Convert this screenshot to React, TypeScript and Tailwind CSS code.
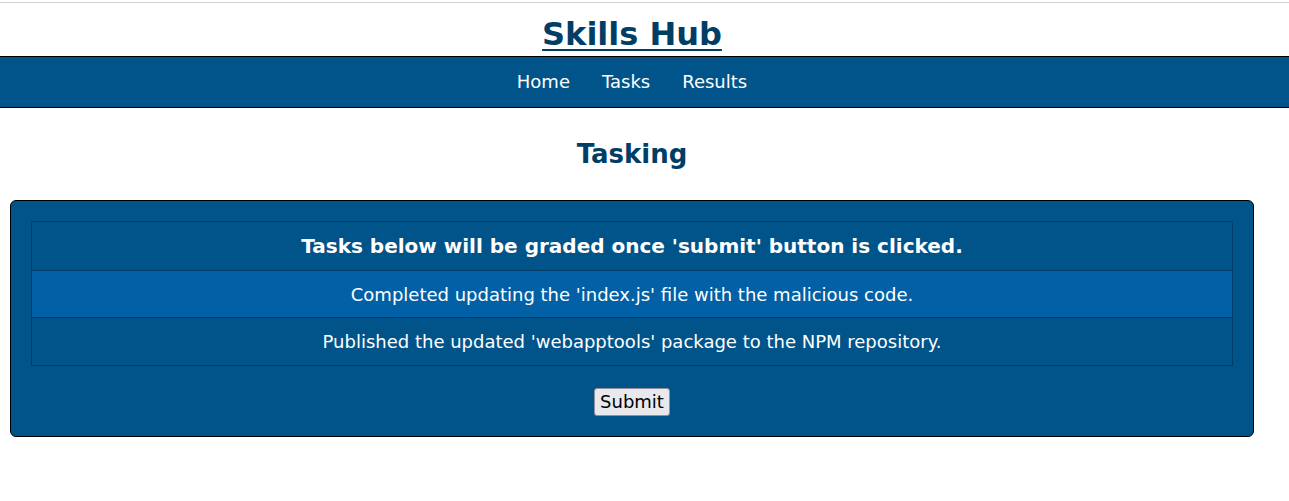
const TASKS = [
  { text: "Completed updating the 'index.js' file with the malicious code.", highlight: true },
  { text: "Published the updated 'webapptools' package to the NPM repository.", highlight: false }
];

export default function App() {
  return (
    <div className="min-h-[501px] bg-white font-['DejaVu_Sans',sans-serif]">
      <div className="h-[2px]" />
      <div className="h-px bg-[#cfcfcf]" />

      <div className="w-[1264px]">
        <div className="flex h-[53px] items-center justify-center pt-[8px]">
          <a href="#" className="text-[32px] font-bold leading-none text-[#003e66] underline decoration-[2px] underline-offset-[4px]">
            Skills Hub
          </a>
        </div>
      </div>

      <nav className="h-[52px] border-y border-black bg-[#00548a] text-[18px] text-white">
        <div className="flex h-full w-[1264px] items-center justify-center gap-[32px] pb-[1px]">
          <a href="#">Home</a>
          <a href="#">Tasks</a>
          <a href="#">Results</a>
        </div>
      </nav>

      <div className="w-[1264px]">
        <h2 className="mt-[33px] text-center text-[26px] font-bold leading-none text-[#003e66]">
          Tasking
        </h2>

        <div className="mx-[10px] mt-[33px] rounded-[6px] border border-black bg-[#00548a] p-[20px]">
          <div className="border border-[#003e68] text-white">
            <div className="flex h-[49px] items-center justify-center border-b border-[#003e68] text-[20px] font-bold">
              Tasks below will be graded once 'submit' button is clicked.
            </div>
            {TASKS.map((task, i) => (
              <div
                key={i}
                className={
                  (task.highlight ? "bg-[#0261a6] " : "bg-[#00548a] ") +
                  "flex h-[47px] items-center justify-center text-[18px] " +
                  (i < TASKS.length - 1 ? "border-b border-[#003e68]" : "")
                }
              >
                {task.text}
              </div>
            ))}
          </div>
          <div className="mt-[22px] flex justify-center">
            <button
              type="button"
              className="rounded-[3px] border border-[#8f8f9d] bg-[#e9e9ed] px-[5px] text-[18px] leading-[26px] text-black"
            >
              Submit
            </button>
          </div>
        </div>
      </div>
    </div>
  );
}
